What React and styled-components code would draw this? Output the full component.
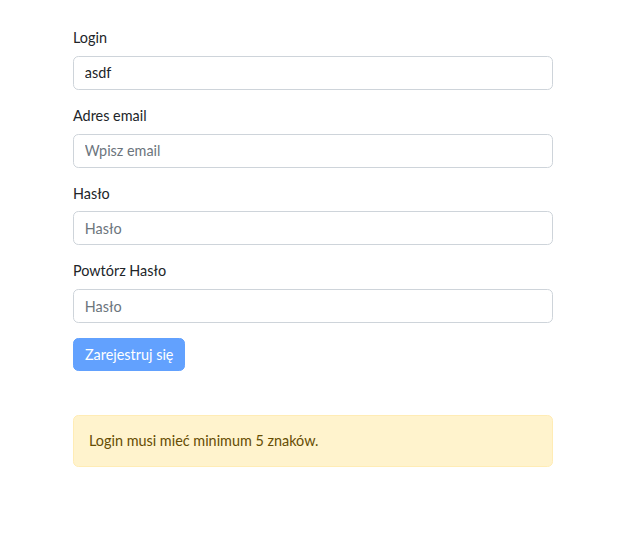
import React from "react";
import styled, { createGlobalStyle } from "styled-components";

const Global = createGlobalStyle`
  body {
    margin: 0;
    background: #ffffff;
    color: #212529;
    font-family: "Segoe UI", Lato, "Noto Sans", sans-serif;
    font-size: 14.4px;
    line-height: 1.5;
  }
`;

const Container = styled.div`
  width: 480px;
  margin: 0 0 0 73px;
  padding-top: 27px;
`;

const Group = styled.div`
  margin-bottom: 15px;
`;

const Label = styled.label`
  display: block;
  margin-bottom: 7.2px;
`;

const Input = styled.input`
  display: block;
  box-sizing: border-box;
  width: 100%;
  height: 34px;
  padding: 5.4px 10.8px;
  font: inherit;
  color: #212529;
  background: #fff;
  border: 1px solid #ced4da;
  border-radius: 5.4px;
  outline: none;

  &::placeholder {
    color: #6c757d;
  }
`;

const Button = styled.button`
  display: block;
  height: 33px;
  padding: 0 11px;
  font: inherit;
  color: #fff;
  background: #62a1fe;
  border: 1px solid #62a1fe;
  border-radius: 5.4px;
`;

const Alert = styled.div`
  margin-top: 43.5px;
  box-sizing: border-box;
  height: 52px;
  padding: 14.4px 15px;
  background: #fff3cd;
  border: 1px solid #ffecb5;
  border-radius: 5.4px;
  color: #664d03;
`;

const fields = [
  { label: "Login", value: "asdf" },
  { label: "Adres email", placeholder: "Wpisz email", type: "email" },
  { label: "Hasło", placeholder: "Hasło", type: "password" },
  { label: "Powtórz Hasło", placeholder: "Hasło", type: "password" },
];

export default function App() {
  return (
    <>
      <Global />
      <Container>
        <form onSubmit={(e) => e.preventDefault()}>
          {fields.map((f) => (
            <Group key={f.label}>
              <Label>{f.label}</Label>
              <Input
                type={f.type || "text"}
                defaultValue={f.value}
                placeholder={f.placeholder}
              />
            </Group>
          ))}
          <Button type="submit" disabled>
            Zarejestruj się
          </Button>
        </form>
        <Alert>Login musi mieć minimum 5 znaków.</Alert>
      </Container>
    </>
  );
}
